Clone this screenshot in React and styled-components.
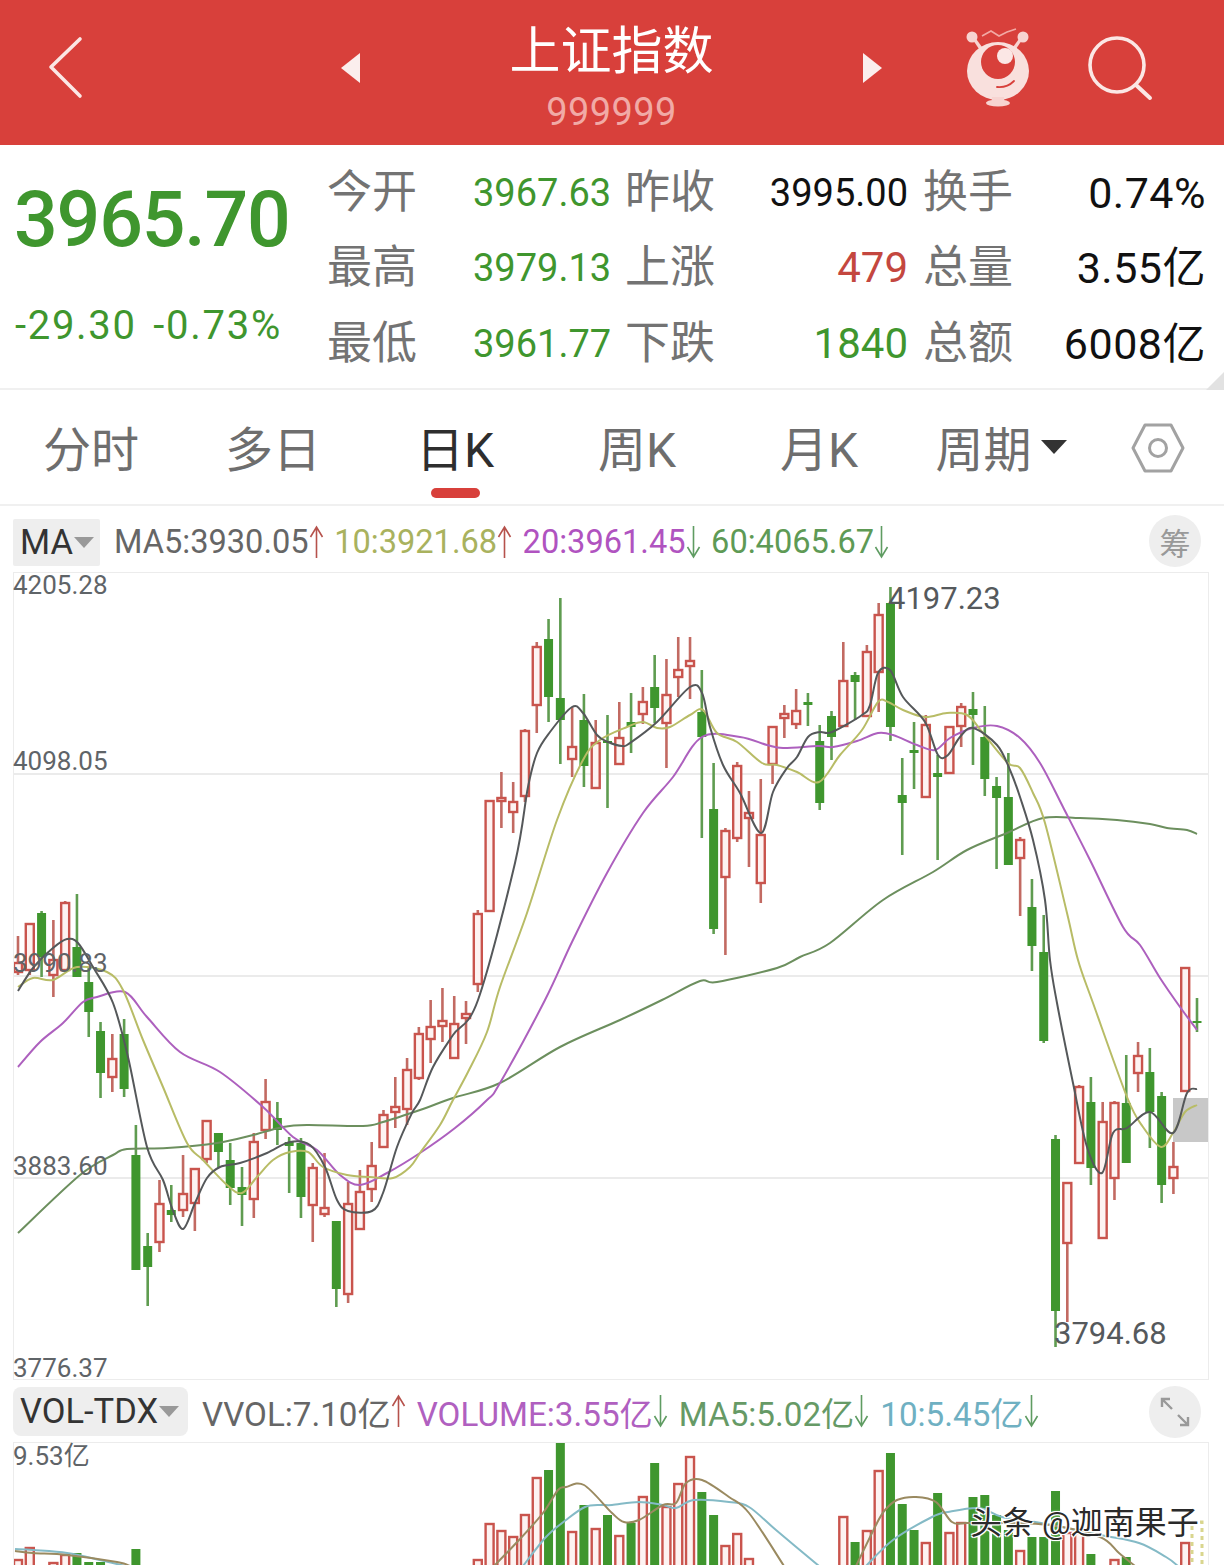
import React from "react";
import styled, { createGlobalStyle } from "styled-components";

const FONT = `Roboto, "Noto Sans CJK SC", sans-serif`;

const GlobalStyle = createGlobalStyle`
  html, body { margin: 0; padding: 0; background: #fff; }
  body { font-family: ${FONT}; width: 1224px; height: 1565px; overflow: hidden; }
  * { box-sizing: border-box; }
`;

const Page = styled.div`
  width: 1224px;
  height: 1565px;
  overflow: hidden;
  display: flex;
  flex-direction: column;
  background: #fff;
`;

/* ---------- header ---------- */
const Header = styled.header`
  height: 145px;
  flex: none;
  background: #d8403b;
  display: grid;
  grid-template-columns: 341px 20px 501px 20px 84px 64px 57px 66px;
  align-items: center;
  padding-bottom: 10px;
`;
const BackSlot = styled.div`
  padding-left: 46px;
  display: flex;
`;
const TitleBlock = styled.div`
  display: flex;
  flex-direction: column;
  align-items: center;
  padding-top: 21px;
`;
const Title = styled.div`
  font-size: 51px;
  line-height: 60px;
  color: #fff;
  font-weight: 400;
`;
const Code = styled.div`
  font-size: 38px;
  line-height: 44px;
  margin-top: 8px;
  color: #f1aaa6;
  letter-spacing: 0.4px;
`;
const Slot = styled.div`
  grid-column: ${(p) => p.$col};
  display: flex;
`;

/* ---------- quote ---------- */
const Quote = styled.section`
  position: relative;
  height: 245px;
  flex: none;
  display: flex;
  border-bottom: 2px solid #f0f0f0;
`;
const PriceBlock = styled.div`
  width: 329px;
  flex: none;
  padding: 30px 0 0 14px;
  color: #3f962e;
`;
const BigPrice = styled.div`
  font-size: 77px;
  line-height: 90px;
  letter-spacing: -1.2px;
  font-weight: 500;
`;
const Change = styled.div`
  margin-top: 39px;
  margin-left: 1px;
  font-size: 40px;
  line-height: 44px;
  white-space: pre;
  letter-spacing: 1.7px;
  word-spacing: 5px;
`;
const StatGrid = styled.div`
  display: grid;
  grid-template-columns: 86px 178px 87px 177px 87px 177px;
  column-gap: 17px;
  grid-auto-rows: 75.5px;
  align-items: center;
  padding-top: 10px;
`;
const StatLabel = styled.div`
  font-size: 45px;
  line-height: 50px;
  margin-left: -2px;
  color: #737373;
  white-space: nowrap;
`;
const StatValue = styled.div`
  font-size: ${(p) => p.$size || 38}px;
  line-height: 50px;
  letter-spacing: ${(p) => (p.$size === 43 ? "0.5px" : "0")};
  text-align: ${(p) => (p.$left ? "left" : "right")};
  padding-left: ${(p) => (p.$left ? "41px" : "0")};
  color: ${(p) => p.$color || "#111"};
  white-space: nowrap;
`;
const Corner = styled.div`
  position: absolute;
  right: 0;
  bottom: -2px;
  width: 0;
  height: 0;
  border-left: 18px solid transparent;
  border-bottom: 18px solid #e2e2e2;
`;

/* ---------- tabs ---------- */
const Tabs = styled.nav`
  height: 116px;
  flex: none;
  display: grid;
  grid-template-columns: repeat(6, 182px) 1fr;
  align-items: center;
  border-bottom: 2px solid #f0f0f0;
`;
const Tab = styled.div`
  position: relative;
  height: 116px;
  display: flex;
  align-items: center;
  justify-content: center;
  gap: 9px;
  padding-bottom: 5px;
  font-size: 48px;
  color: ${(p) => (p.$active ? "#2e2e2e" : "#6e6e6e")};
  &::after {
    content: "";
    display: ${(p) => (p.$active ? "block" : "none")};
    position: absolute;
    left: 67px;
    bottom: 8px;
    width: 49px;
    height: 10px;
    border-radius: 5px;
    background: #d8403b;
  }
`;
const Caret = styled.span`
  width: 0;
  height: 0;
  border-left: 13px solid transparent;
  border-right: 13px solid transparent;
  border-top: 14px solid #333;
  margin-top: 2px;
`;
const HexSlot = styled.div`
  padding-left: 39px;
  display: flex;
`;

/* ---------- indicator legends ---------- */
const Legend = styled.div`
  height: ${(p) => p.$h}px;
  flex: none;
  display: flex;
  align-items: center;
  padding-left: 13px;
  padding-top: ${(p) => p.$pt}px;
  position: relative;
  font-size: ${(p) => p.$fs}px;
  white-space: nowrap;
`;
const IndicatorBox = styled.div`
  width: ${(p) => p.$w}px;
  height: ${(p) => p.$boxH}px;
  flex: none;
  margin-right: 14px;
  padding-left: 7px;
  display: flex;
  align-items: center;
  gap: 1px;
  background: #eeeeee;
  border-radius: ${(p) => p.$r}px;
  color: #333;
  font-size: 34.5px;
`;
const SmallCaret = styled.span`
  width: 0;
  height: 0;
  border-left: 10px solid transparent;
  border-right: 10px solid transparent;
  border-top: 11px solid #999;
`;
const LegendItem = styled.span`
  display: flex;
  align-items: center;
  color: ${(p) => p.$color};
  margin-right: ${(p) => p.$gap}px;
`;
const RoundButton = styled.div`
  position: absolute;
  right: 23px;
  top: ${(p) => p.$top}px;
  width: 52px;
  height: 52px;
  border-radius: 50%;
  background: #eeeeee;
  color: #999;
  font-size: 31px;
  display: flex;
  align-items: center;
  justify-content: center;
`;

/* ---------- chart panels ---------- */
const ChartPanel = styled.div`
  position: relative;
  height: ${(p) => p.$h}px;
  flex: none;
  margin: 0 15px 0 13px;
  border: 1px solid #ececec;
  ${(p) => p.$open && "border-bottom: none;"}
  svg { display: block; position: absolute; left: 0; top: 0; }
`;
const AxisLabel = styled.span`
  position: absolute;
  left: -1px;
  top: ${(p) => p.$top}px;
  font-size: 26px;
  line-height: 30px;
  color: #5f6468;
`;
const ExtremeLabel = styled.span`
  position: absolute;
  left: ${(p) => p.$left}px;
  top: ${(p) => p.$top}px;
  font-size: 31px;
  line-height: 36px;
  color: #55595c;
`;
const Watermark = styled.div`
  position: absolute;
  left: 970px;
  top: 1503px;
  font-size: 32px;
  line-height: 40px;
  color: #2a2a2a;
  white-space: pre;
  text-shadow: 1px 1px 0 #fff, -1px -1px 0 #fff, 1px -1px 0 #fff, -1px 1px 0 #fff, 0 0 3px #fff;
`;

/* ---------- data: [high, bodyTop, bodyBottom, low, "r"|"g"] in page y ---------- */
const CANDLES = [
  [936, 963, 972, 975, "r"], [924, 924, 970, 975, "r"], [911, 913, 957, 977, "g"], [920, 960, 975, 997, "r"],
  [901, 903, 970, 972, "r"], [894, 947, 977, 977, "g"], [967, 982, 1012, 1037, "g"], [1022, 1031, 1073, 1098, "g"],
  [1034, 1059, 1077, 1092, "r"], [1019, 1034, 1089, 1097, "g"], [1125, 1155, 1270, 1270, "g"], [1233, 1246, 1267, 1306, "g"],
  [1180, 1204, 1242, 1252, "r"], [1185, 1210, 1215, 1222, "g"], [1155, 1194, 1210, 1217, "r"], [1169, 1169, 1203, 1231, "r"],
  [1121, 1121, 1159, 1163, "r"], [1133, 1133, 1152, 1168, "g"], [1143, 1160, 1188, 1205, "g"], [1167, 1187, 1195, 1226, "g"],
  [1133, 1142, 1199, 1218, "r"], [1079, 1102, 1130, 1139, "r"], [1102, 1118, 1130, 1145, "g"], [1137, 1142, 1146, 1193, "g"],
  [1138, 1143, 1197, 1218, "g"], [1163, 1168, 1205, 1242, "r"], [1153, 1208, 1214, 1217, "r"], [1221, 1221, 1289, 1307, "g"],
  [1182, 1204, 1294, 1303, "r"], [1170, 1192, 1229, 1230, "r"], [1142, 1166, 1189, 1202, "r"], [1110, 1115, 1147, 1147, "r"],
  [1077, 1107, 1112, 1128, "r"], [1058, 1070, 1109, 1125, "r"], [1027, 1034, 1078, 1080, "r"], [1000, 1027, 1039, 1063, "r"],
  [988, 1021, 1026, 1042, "r"], [996, 1024, 1058, 1058, "r"], [1001, 1014, 1018, 1044, "r"], [910, 914, 984, 992, "r"],
  [801, 801, 911, 911, "r"], [772, 798, 801, 828, "r"], [782, 802, 812, 833, "r"], [729, 731, 796, 802, "r"],
  [642, 647, 705, 733, "r"], [619, 639, 697, 722, "g"], [598, 698, 720, 764, "g"], [707, 747, 759, 777, "r"],
  [694, 720, 766, 787, "g"], [720, 743, 788, 788, "r"], [715, 741, 743, 808, "g"], [702, 738, 764, 764, "r"],
  [693, 722, 727, 753, "g"], [687, 702, 714, 724, "r"], [655, 687, 708, 723, "g"], [659, 695, 723, 768, "r"],
  [637, 670, 677, 697, "r"], [637, 661, 666, 699, "r"], [670, 712, 737, 838, "g"], [763, 809, 929, 934, "g"],
  [828, 831, 877, 955, "r"], [762, 766, 838, 842, "r"], [791, 813, 818, 867, "r"], [779, 835, 883, 903, "r"],
  [727, 727, 764, 784, "r"], [705, 714, 718, 738, "r"], [689, 711, 724, 729, "r"], [693, 702, 705, 726, "g"],
  [725, 741, 803, 810, "g"], [711, 716, 737, 760, "g"], [642, 681, 726, 726, "r"], [672, 675, 682, 720, "g"],
  [645, 652, 716, 716, "r"], [603, 615, 672, 712, "r"], [587, 603, 727, 741, "g"], [758, 795, 803, 855, "g"],
  [722, 750, 753, 789, "g"], [715, 725, 797, 797, "r"], [755, 773, 777, 860, "g"], [727, 727, 773, 773, "r"],
  [703, 707, 726, 747, "r"], [692, 709, 715, 765, "g"], [706, 737, 779, 796, "g"], [777, 786, 798, 869, "g"],
  [753, 797, 865, 865, "g"], [837, 840, 858, 916, "r"], [879, 907, 946, 971, "g"], [915, 952, 1041, 1043, "g"],
  [1135, 1139, 1311, 1347, "g"], [1183, 1183, 1243, 1322, "r"], [1085, 1087, 1163, 1163, "r"], [1077, 1102, 1168, 1185, "g"],
  [1102, 1122, 1238, 1238, "r"], [1101, 1103, 1178, 1200, "r"], [1055, 1103, 1163, 1163, "g"], [1042, 1056, 1073, 1092, "r"],
  [1048, 1072, 1112, 1148, "g"], [1092, 1096, 1185, 1203, "g"], [1142, 1167, 1178, 1194, "r"], [968, 968, 1091, 1091, "r"],
  [998, 1021, 1023, 1032, "g"],
];

const MA5 = [[18,991],[33,968],[53,948],[67,939],[78,943],[93,967],[113,1003],[128,1057],[147,1147],[163,1180],[172,1208],[183,1229],[195,1203],[207,1178],[220,1167],[240,1163],[267,1153],[290,1142],[310,1145],[325,1167],[337,1200],[348,1211],[372,1211],[383,1193],[397,1147],[412,1113],[420,1100],[433,1067],[453,1035],[478,1000],[515,863],[528,787],[537,753],[550,732],[572,707],[583,713],[597,735],[608,742],[622,746],[630,743],[657,722],[690,687],[702,693],[710,727],[723,765],[740,793],[761,833],[773,792],[787,768],[797,757],[808,737],[820,732],[832,732],[862,715],[870,705],[878,673],[890,670],[903,697],[925,722],[938,755],[948,755],[960,737],[973,728],[997,745],[1010,770],[1020,797],[1033,840],[1045,900],[1050,960],[1057,1003],[1073,1083],[1087,1147],[1102,1173],[1113,1133],[1127,1128],[1150,1112],[1173,1133],[1187,1093],[1197,1089]];
const MA10 = [[18,987],[33,978],[53,980],[77,967],[107,972],[123,990],[143,1040],[163,1087],[187,1143],[203,1160],[227,1185],[242,1193],[257,1177],[273,1160],[290,1152],[308,1152],[323,1167],[347,1175],[370,1177],[393,1178],[410,1167],[420,1153],[440,1125],[453,1100],[468,1072],[487,1032],[500,987],[527,913],[557,820],[583,760],[600,740],[627,727],[643,722],[657,728],[670,727],[690,715],[703,710],[717,733],[737,742],[762,763],[777,765],[797,772],[819,782],[840,755],[862,730],[878,702],[888,702],[903,710],[925,717],[947,713],[967,715],[983,733],[1008,763],[1020,768],[1033,793],[1045,823],[1067,913],[1078,960],[1093,1003],[1127,1097],[1143,1127],[1161,1147],[1173,1133],[1185,1112],[1197,1105]];
const MA20 = [[18,1067],[40,1042],[63,1023],[83,1002],[97,997],[125,992],[147,1017],[180,1052],[220,1072],[263,1107],[293,1137],[317,1150],[340,1175],[360,1185],[387,1173],[420,1153],[455,1128],[487,1100],[500,1083],[545,1000],[572,942],[607,873],[643,813],[673,777],[702,737],[740,737],[767,745],[783,748],[818,746],[833,747],[857,741],[878,733],[893,735],[917,745],[935,750],[950,738],[973,728],[997,726],[1020,738],[1040,763],[1063,807],[1090,860],[1123,927],[1140,945],[1160,978],[1180,1007],[1197,1030]];
const MA60 = [[18,1233],[80,1175],[113,1155],[127,1149],[167,1148],[217,1143],[253,1135],[283,1127],[307,1125],[363,1126],[383,1122],[420,1110],[453,1098],[500,1083],[560,1047],[620,1020],[662,1000],[700,981],[717,982],[777,968],[800,957],[830,943],[883,900],[933,872],[967,850],[1007,833],[1043,818],[1080,818],[1117,820],[1150,824],[1167,828],[1187,830],[1197,834]];

// volume bars: [index, top y, "r"|"g"]
const VOLUMES = [
  [0,1560,"r"],[1,1548,"r"],[3,1563,"r"],[4,1555,"r"],[5,1553,"g"],[6,1562,"g"],[7,1562,"g"],[10,1549,"g"],
  [39,1560,"r"],[40,1524,"r"],[41,1531,"r"],[42,1537,"r"],[43,1515,"r"],[44,1478,"r"],[45,1470,"g"],[46,1443,"g"],
  [47,1532,"r"],[48,1505,"g"],[49,1529,"r"],[50,1515,"g"],[51,1536,"r"],[52,1523,"g"],[53,1497,"r"],[54,1463,"g"],
  [55,1507,"r"],[56,1484,"r"],[57,1457,"r"],[58,1492,"g"],[59,1515,"g"],[60,1546,"r"],[61,1534,"r"],[62,1559,"r"],
  [70,1517,"r"],[71,1542,"g"],[72,1531,"r"],[73,1471,"r"],[74,1453,"g"],[75,1504,"g"],[76,1530,"g"],[77,1543,"r"],
  [78,1493,"g"],[79,1533,"r"],[80,1523,"r"],[81,1497,"g"],[82,1495,"g"],[83,1515,"g"],[84,1530,"g"],[85,1551,"r"],
  [86,1537,"g"],[87,1537,"g"],[88,1491,"g"],[89,1533,"r"],[90,1533,"r"],[91,1554,"g"],[93,1560,"r"],[94,1557,"g"],
  [99,1543,"r"],
];
const VOL_MA5 = [
  [[15,1551],[33,1553],[67,1555],[117,1562],[130,1566]],
  [[494,1566],[519,1540],[543,1513],[558,1490],[566,1487],[584,1485],[612,1513],[624,1522],[639,1520],[663,1505],[676,1503],[686,1483],[702,1480],[729,1497],[749,1513],[784,1566]],
  [[856,1566],[877,1523],[885,1510],[897,1500],[916,1497],[936,1502],[952,1522],[967,1523],[1000,1523],[1050,1525],[1100,1537],[1119,1553],[1135,1566]],
];
const VOL_MA10 = [
  [[15,1549],[33,1550],[67,1553],[100,1560],[125,1566]],
  [[523,1566],[546,1537],[566,1520],[585,1507],[601,1505],[612,1505],[639,1502],[663,1505],[676,1508],[694,1500],[729,1502],[749,1507],[776,1530],[819,1566]],
  [[866,1566],[893,1540],[932,1517],[948,1512],[979,1508],[1002,1517],[1041,1523],[1100,1535],[1139,1543],[1166,1557],[1178,1566]],
];

const candleX = (i) => 18 + 11.79 * i;

// catmull-rom through the sampled points so the averages read as curves
const toPath = (pts) => {
  let d = `M${pts[0][0]} ${pts[0][1]}`;
  for (let i = 0; i < pts.length - 1; i++) {
    const p0 = pts[i - 1] || pts[i];
    const p1 = pts[i];
    const p2 = pts[i + 1];
    const p3 = pts[i + 2] || p2;
    const c1x = p1[0] + (p2[0] - p0[0]) / 6;
    const c1y = p1[1] + (p2[1] - p0[1]) / 6;
    const c2x = p2[0] - (p3[0] - p1[0]) / 6;
    const c2y = p2[1] - (p3[1] - p1[1]) / 6;
    d += ` C${c1x.toFixed(1)} ${c1y.toFixed(1)} ${c2x.toFixed(1)} ${c2y.toFixed(1)} ${p2[0]} ${p2[1]}`;
  }
  return d;
};

function Candle({ i, high, top, bottom, low, kind }) {
  const x = candleX(i);
  if (kind === "g") {
    return (
      <g>
        <line x1={x} x2={x} y1={high} y2={low} stroke="#5f9c50" strokeWidth="2.6" />
        <rect x={x - 4.5} y={top} width="9" height={bottom - top} fill="#3f962e" />
      </g>
    );
  }
  return (
    <g>
      <line x1={x} x2={x} y1={high} y2={top} stroke="#c26a62" strokeWidth="2.6" />
      <line x1={x} x2={x} y1={bottom} y2={low} stroke="#c26a62" strokeWidth="2.6" />
      <rect x={x - 4} y={top} width="8" height={bottom - top} fill="#fdf3f2" stroke="#c9544d" strokeWidth="2.4" />
    </g>
  );
}

function MainChart() {
  return (
    <svg width="1194" height="806" viewBox="14 573 1194 806">
      <g stroke="#e4e4e4" strokeWidth="1.5">
        <line x1="14" x2="1210" y1="774" y2="774" />
        <line x1="14" x2="1210" y1="976" y2="976" />
        <line x1="14" x2="1210" y1="1178" y2="1178" />
      </g>
      <rect x="1173" y="1098" width="37" height="44" fill="#c8c8c8" />
      {CANDLES.map((c, i) => (
        <Candle key={i} i={i} high={c[0]} top={c[1]} bottom={c[2]} low={c[3]} kind={c[4]} />
      ))}
      <g fill="none" strokeWidth="2" strokeLinejoin="round">
        <path d={toPath(MA60)} stroke="#6c8f5e" />
        <path d={toPath(MA20)} stroke="#ad60be" />
        <path d={toPath(MA10)} stroke="#b8bc66" />
        <path d={toPath(MA5)} stroke="#55585a" />
      </g>
    </svg>
  );
}

function VolumeChart() {
  return (
    <svg width="1194" height="122" viewBox="14 1443 1194 122">
      {VOLUMES.map(([i, top, kind]) => {
        const x = candleX(i);
        return kind === "g" ? (
          <rect key={i} x={x - 4.5} y={top} width="9" height={1566 - top} fill="#3f962e" />
        ) : (
          <rect key={i} x={x - 4} y={top} width="8" height={1570 - top} fill="#fdf3f2" stroke="#c9544d" strokeWidth="2.4" />
        );
      })}
      <rect x="1192" y="1522" width="10" height="46" fill="none" stroke="#d9d68e" strokeWidth="3" strokeDasharray="4 4" />
      <g fill="none" strokeWidth="2">
        {VOL_MA10.map((l, i) => <path key={i} d={toPath(l)} stroke="#84bac6" />)}
        {VOL_MA5.map((l, i) => <path key={i} d={toPath(l)} stroke="#9a8a60" />)}
      </g>
    </svg>
  );
}

const BackIcon = () => (
  <svg width="38" height="64" viewBox="0 0 38 64">
    <path d="M34 3 L5 31 L34 60" fill="none" stroke="#fbe7e5" strokeWidth="3.6" strokeLinecap="round" strokeLinejoin="round" />
  </svg>
);
const Triangle = ({ right }) => (
  <svg width="20" height="30" viewBox="0 0 20 30">
    <path d={right ? "M1 0 L20 15 L1 30 Z" : "M19 0 L0 15 L19 30 Z"} fill="#fbeeed" />
  </svg>
);
const Mascot = () => (
  <svg width="64" height="80" viewBox="967 29 64 80">
    <g fill="#f7d4d1">
      <circle cx="973" cy="38" r="5.5" />
      <circle cx="1024" cy="38" r="5.5" />
      <path d="M972 38 L980 50 L983 48 L975 37 Z" />
      <path d="M1025 38 L1017 50 L1014 48 L1022 37 Z" />
      <ellipse cx="999" cy="72" rx="31" ry="29" fill="#f9e0dd" />
      <rect x="993" y="98" width="12" height="5" />
      <ellipse cx="999" cy="104" rx="12" ry="3.6" />
    </g>
    <path d="M983 37 L992 32 L1000 37 L1008 33 L1017 30" fill="none" stroke="#f2a9a4" strokeWidth="1.6" />
    <circle cx="999" cy="63" r="17" fill="#d8403b" />
    <circle cx="1006" cy="57" r="8" fill="#fbe7e5" />
    <path d="M998 88 Q1008 89 1015 82" fill="none" stroke="#d8403b" strokeWidth="1.8" strokeLinecap="round" />
  </svg>
);
const SearchIcon = () => (
  <svg width="66" height="66" viewBox="0 0 66 66">
    <circle cx="30" cy="30" r="27" fill="none" stroke="#fbe7e5" strokeWidth="3.6" />
    <path d="M49 50 L63 63" stroke="#fbe7e5" strokeWidth="4" strokeLinecap="round" />
  </svg>
);
const HexIcon = () => (
  <svg width="54" height="50" viewBox="0 0 54 50">
    <path d="M14 2 L40 2 L52 25 L40 48 L14 48 L2 25 Z" fill="none" stroke="#a2a2a2" strokeWidth="3" strokeLinejoin="round" />
    <circle cx="27" cy="25" r="8.5" fill="none" stroke="#a2a2a2" strokeWidth="3" />
  </svg>
);
const Arrow = ({ up }) => (
  <svg width="15" height="34" viewBox="0 0 15 34" style={{ flex: "none" }}>
    {up ? (
      <path d="M7.5 33 L7.5 2 M1.5 12 L7.5 2 L13.5 12" fill="none" stroke="#b6524c" strokeWidth="1.6" />
    ) : (
      <path d="M7.5 1 L7.5 32 M1.5 22 L7.5 32 L13.5 22" fill="none" stroke="#5f9c62" strokeWidth="1.6" />
    )}
  </svg>
);
const ExpandIcon = () => (
  <svg width="30" height="30" viewBox="0 0 30 30">
    <path d="M2 10 L2 2 L10 2 M2 2 L12 12 M28 20 L28 28 L20 28 M28 28 L18 18" fill="none" stroke="#999" strokeWidth="2.4" />
  </svg>
);

const GREEN = "#3f962e";
const STATS = [
  { a: "今开", av: "3967.63", b: "昨收", bv: "3995.00", c: "换手", cv: "0.74%" },
  { a: "最高", av: "3979.13", b: "上涨", bv: "479", bc: "#c4473f", bs: 42, c: "总量", cv: "3.55亿" },
  { a: "最低", av: "3961.77", b: "下跌", bv: "1840", bc: GREEN, bs: 42, c: "总额", cv: "6008亿" },
];
const TABS = ["分时", "多日", "日K", "周K", "月K"];

export default function App() {
  return (
    <Page>
      <GlobalStyle />
      <Header>
        <BackSlot><BackIcon /></BackSlot>
        <Triangle />
        <TitleBlock>
          <Title>上证指数</Title>
          <Code>999999</Code>
        </TitleBlock>
        <Triangle right />
        <Slot $col="6"><Mascot /></Slot>
        <Slot $col="8"><SearchIcon /></Slot>
      </Header>

      <Quote>
        <PriceBlock>
          <BigPrice>3965.70</BigPrice>
          <Change>{"-29.30 -0.73%"}</Change>
        </PriceBlock>
        <StatGrid>
          {STATS.map((row) => (
            <React.Fragment key={row.a}>
              <StatLabel>{row.a}</StatLabel>
              <StatValue $left $color={GREEN}>{row.av}</StatValue>
              <StatLabel>{row.b}</StatLabel>
              <StatValue $color={row.bc} $size={row.bs}>{row.bv}</StatValue>
              <StatLabel>{row.c}</StatLabel>
              <StatValue $size={43}>{row.cv}</StatValue>
            </React.Fragment>
          ))}
        </StatGrid>
        <Corner />
      </Quote>

      <Tabs>
        {TABS.map((t) => (
          <Tab key={t} $active={t === "日K"}>{t}</Tab>
        ))}
        <Tab>周期<Caret /></Tab>
        <HexSlot><HexIcon /></HexSlot>
      </Tabs>

      <Legend $h={66} $pt={6} $fs={32.6}>
        <IndicatorBox $w={87} $boxH={47} $r={2}>MA<SmallCaret /></IndicatorBox>
        <LegendItem $gap={10.5} $color="#666">MA5:3930.05<Arrow up /></LegendItem>
        <LegendItem $gap={10.5} $color="#a9b25e">10:3921.68<Arrow up /></LegendItem>
        <LegendItem $gap={10.5} $color="#b053c0">20:3961.45<Arrow /></LegendItem>
        <LegendItem $gap={10.5} $color="#5e9a55">60:4065.67<Arrow /></LegendItem>
        <RoundButton $top={9}>筹</RoundButton>
      </Legend>

      <ChartPanel $h={808}>
        <MainChart />
        <AxisLabel $top={-3}>4205.28</AxisLabel>
        <AxisLabel $top={173}>4098.05</AxisLabel>
        <AxisLabel $top={375}>3990.83</AxisLabel>
        <AxisLabel $top={578}>3883.60</AxisLabel>
        <AxisLabel $top={780}>3776.37</AxisLabel>
        <ExtremeLabel $left={874} $top={8}>4197.23</ExtremeLabel>
        <ExtremeLabel $left={1040} $top={743}>3794.68</ExtremeLabel>
      </ChartPanel>

      <Legend $h={62} $pt={0} $fs={33.2}>
        <IndicatorBox $w={175} $boxH={49} $r={8}>VOL-TDX<SmallCaret /></IndicatorBox>
        <LegendItem $gap={11} $color="#666">VVOL:7.10亿<Arrow up /></LegendItem>
        <LegendItem $gap={11} $color="#b060c0">VOLUME:3.55亿<Arrow /></LegendItem>
        <LegendItem $gap={11} $color="#669a66">MA5:5.02亿<Arrow /></LegendItem>
        <LegendItem $gap={11} $color="#6fb0c2">10:5.45亿<Arrow /></LegendItem>
        <RoundButton $top={6}><ExpandIcon /></RoundButton>
      </Legend>

      <ChartPanel $h={130} $open>
        <VolumeChart />
        <AxisLabel $top={-2}>9.53亿</AxisLabel>
      </ChartPanel>

      <Watermark>{"头条 @迦南果子"}</Watermark>
    </Page>
  );
}
